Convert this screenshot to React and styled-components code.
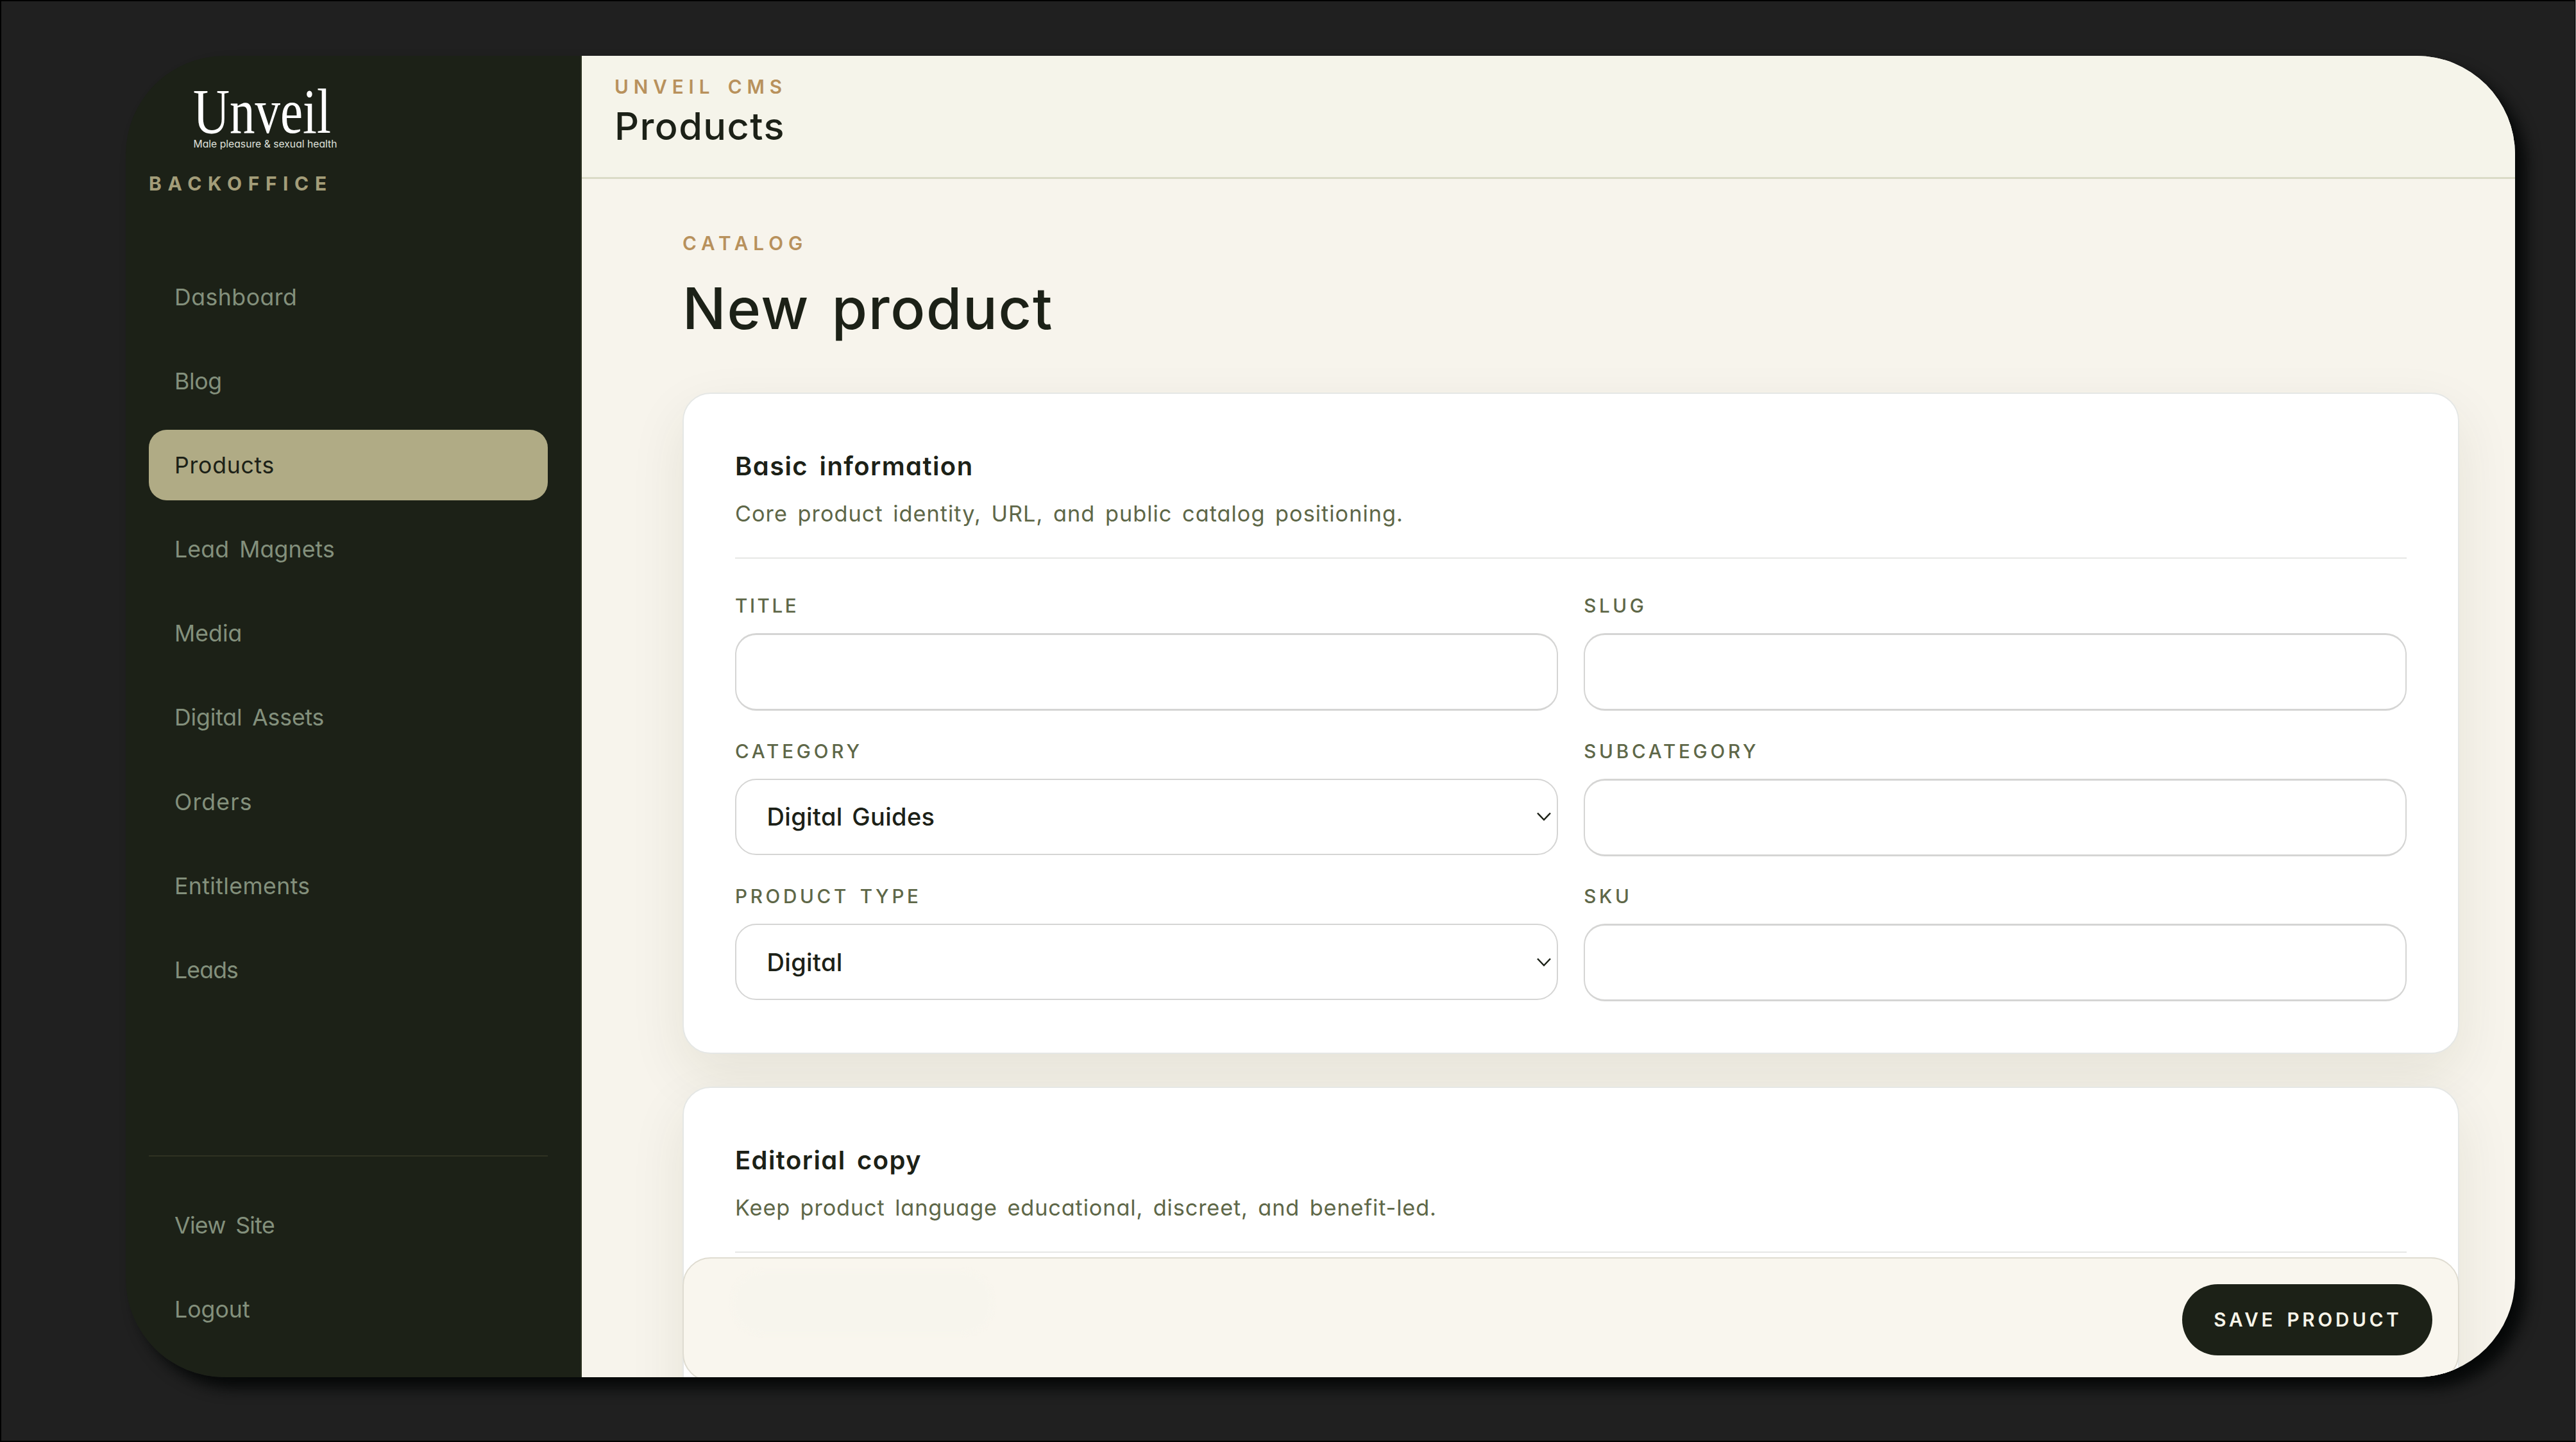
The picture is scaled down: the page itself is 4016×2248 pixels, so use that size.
import React from "react";
import styled, { createGlobalStyle } from "styled-components";

const GlobalStyle = createGlobalStyle`
  *, *::before, *::after { box-sizing: border-box; }
  html, body { margin: 0; padding: 0; background: #8c8c8c; }
  body {
    font-family: Inter, "Open Sans", "Liberation Sans", sans-serif;
    font-feature-settings: "cv11" 1;
    color: #1c2117;
    overflow: hidden;
  }
  h1, h2, p { margin: 0; }
`;

const Desktop = styled.div`
  width: 4015px;
  height: 2248px;
  padding: 85px 0 0 194px;
  background: #202020;
  border: 2px solid #000;
  border-right-width: 1px;
  overflow: hidden;
`;

const Window = styled.div`
  position: relative;
  display: flex;
  width: 3725px;
  height: 2060px;
  border-radius: 154px;
  box-shadow: 17px 17px 22px #060808;
  overflow: hidden;
`;

const Sidebar = styled.aside`
  display: flex;
  flex-direction: column;
  flex: none;
  width: 711px;
  padding: 0 51px 51px 36px;
  background: #1c2117;
  border-right: 2px solid #2a301f;
`;

const Logo = styled.svg`
  display: block;
  flex: none;
  width: 250px;
  height: 161px;
  margin-left: 58px;
  overflow: visible;
`;

const BrandLabel = styled.div`
  margin-top: 16px;
  line-height: 44px;
  font-size: 30px;
  font-weight: 700;
  letter-spacing: 9.6px;
  color: #a39d79;
`;

const Nav = styled.nav`
  display: flex;
  flex-direction: column;
  gap: 21.1px;
  margin-top: 100px;
`;

const FooterNav = styled(Nav)`
  margin-top: auto;
  padding-top: 52px;
  border-top: 2px solid #2f3222;
`;

const NavItem = styled.a`
  display: flex;
  align-items: center;
  height: 110px;
  padding: 0 40px;
  border-radius: 28px;
  font-size: 35.7px;
  font-weight: 400;
  letter-spacing: ${(p) => p.$ls || 0}px;
  word-spacing: 6px;
  white-space: pre;
  background: ${(p) => (p.$active ? "#b0ab85" : "transparent")};
  color: ${(p) => (p.$active ? "#1c2117" : "#83907c")};
`;

const Main = styled.main`
  display: flex;
  flex-direction: column;
  flex: 1;
  min-width: 0;
  background: #f7f4ec;
`;

const TopBar = styled.header`
  flex: none;
  height: 192px;
  padding: 26px 51px 0;
  background: #f5f4ea;
  border-bottom: 3px solid #dadbc7;
`;

const Eyebrow = styled.div`
  line-height: 44px;
  font-size: 29.7px;
  font-weight: 600;
  letter-spacing: 7.9px;
  word-spacing: ${(p) => p.$ws || 0}px;
  color: #b8915c;
`;

const BarTitle = styled.div`
  line-height: 70px;
  margin-top: 4px;
  font-size: 59.5px;
  font-weight: 500;
  letter-spacing: 1.4px;
`;

const Content = styled.section`
  flex: 1;
  min-height: 0;
  padding: 78px 87px 0 157px;
  overflow: hidden;
`;

const PageTitle = styled.h1`
  margin-top: 32px;
  margin-bottom: 83px;
  line-height: 96px;
  font-size: 89.5px;
  font-weight: 500;
  letter-spacing: 1.7px;
  word-spacing: 9px;
`;

const Card = styled.section`
  height: 1031px;
  margin-bottom: 51px;
  padding: 80px;
  background: #fff;
  border: 2px solid #e5e7e5;
  border-radius: 44px;
  box-shadow: 0 33px 87px rgba(50, 56, 10, 0.09);
`;

const CardHead = styled.header`
  padding-bottom: 38px;
  border-bottom: 2px solid #e6e7e5;
`;

const CardTitle = styled.h2`
  line-height: 65px;
  font-size: 40px;
  font-weight: 600;
  letter-spacing: 1.4px;
  word-spacing: 6px;
`;

const CardText = styled.p`
  margin-top: 12px;
  line-height: 60px;
  font-size: 34.3px;
  letter-spacing: ${(p) => p.$ls || 1}px;
  word-spacing: 5px;
  color: #5e6748;
`;

const Fields = styled.div`
  display: grid;
  grid-template-columns: 1fr 1fr;
  grid-auto-rows: 186px;
  gap: 40.5px;
  margin-top: 51px;
`;

const Field = styled.label`
  display: flex;
  flex-direction: column;
  gap: 21px;
`;

const FieldLabel = styled.span`
  line-height: 44px;
  font-size: 29.6px;
  font-weight: 500;
  letter-spacing: ${(p) => p.$ls}px;
  word-spacing: 4px;
  color: #5e6748;
`;

const Control = styled.div`
  display: flex;
  align-items: center;
  justify-content: space-between;
  height: ${(p) => (p.$select ? 119 : 121)}px;
  padding: 0 8px 0 47.5px;
  border: solid #d5d5d4;
  border-width: ${(p) => (p.$select ? "2px" : "3px 2px")};
  border-radius: 33px;
  background: #fff;
  font-size: 38px;
  font-weight: 500;
  letter-spacing: 0.35px;
  word-spacing: 4px;
`;

const ActionBar = styled.footer`
  position: absolute;
  left: 868px;
  right: 87px;
  bottom: -7px;
  display: flex;
  justify-content: flex-end;
  align-items: center;
  height: 194px;
  padding: 0 40px;
  background: #f9f6ee;
  border: 2px solid #dfdcd1;
  border-radius: 44px;

  &::before {
    content: "";
    position: absolute;
    left: 76px;
    top: 20px;
    width: 405px;
    height: 98px;
    border-radius: 46px;
    background: #f7f5ed;
    filter: blur(3px);
  }
`;

const SaveButton = styled.button`
  width: 390px;
  height: 111px;
  padding: 0 0 0 2px;
  border: 0;
  border-radius: 56px;
  background: #1c2117;
  color: #f7f4e8;
  font-family: inherit;
  font-size: 29.6px;
  font-weight: 600;
  letter-spacing: 4.8px;
  word-spacing: 5px;
`;

const Chevron = () => (
  <svg width="24" height="16" viewBox="0 0 24 16" fill="none">
    <path d="M2 2.5 12 13 22 2.5" stroke="#1c2117" strokeWidth="2.5" />
  </svg>
);

const Wordmark = () => (
  <Logo viewBox="0 -41 250 161">
    <text x="11" y="79" fontFamily="Liberation Serif, serif" fontSize="100" fill="#fff" textLength="215" lengthAdjust="spacingAndGlyphs">
      Unveil
    </text>
    <text x="11.5" y="101.5" fontSize="16" fontWeight="400" fill="#dfe0db" textLength="224" lengthAdjust="spacingAndGlyphs">
      Male pleasure &amp; sexual health
    </text>
  </Logo>
);

const NAV = [
  { label: "Dashboard", ls: 0.45 },
  { label: "Blog", ls: -0.4 },
  { label: "Products", ls: 0.7, active: true },
  { label: "Lead Magnets", ls: 0.1 },
  { label: "Media", ls: 0 },
  { label: "Digital Assets", ls: -0.2 },
  { label: "Orders", ls: 1.1 },
  { label: "Entitlements", ls: 0.35 },
  { label: "Leads", ls: -0.9 },
];

const FOOTER_NAV = [
  { label: "View Site", ls: -0.7 },
  { label: "Logout", ls: 0 },
];

const FIELDS = [
  { label: "TITLE", ls: 3.6 },
  { label: "SLUG", ls: 4.6 },
  { label: "CATEGORY", ls: 4.8, value: "Digital Guides" },
  { label: "SUBCATEGORY", ls: 4.75 },
  { label: "PRODUCT TYPE", ls: 4.7, value: "Digital" },
  { label: "SKU", ls: 4.6 },
];

const renderNav = (items) =>
  items.map((n) => (
    <NavItem key={n.label} $active={n.active} $ls={n.ls}>
      {n.label}
    </NavItem>
  ));

export default function App() {
  return (
    <>
      <GlobalStyle />
      <Desktop>
        <Window>
          <Sidebar>
            <Wordmark />
            <BrandLabel>BACKOFFICE</BrandLabel>
            <Nav>{renderNav(NAV)}</Nav>
            <FooterNav>{renderNav(FOOTER_NAV)}</FooterNav>
          </Sidebar>
          <Main>
            <TopBar>
              <Eyebrow $ws={5}>UNVEIL CMS</Eyebrow>
              <BarTitle>Products</BarTitle>
            </TopBar>
            <Content>
              <Eyebrow>CATALOG</Eyebrow>
              <PageTitle>New product</PageTitle>
              <Card>
                <CardHead>
                  <CardTitle>Basic information</CardTitle>
                  <CardText $ls={1}>Core product identity, URL, and public catalog positioning.</CardText>
                </CardHead>
                <Fields>
                  {FIELDS.map((f) => (
                    <Field key={f.label}>
                      <FieldLabel $ls={f.ls}>{f.label}</FieldLabel>
                      <Control $select={Boolean(f.value)}>
                        {f.value && (
                          <>
                            <span>{f.value}</span>
                            <Chevron />
                          </>
                        )}
                      </Control>
                    </Field>
                  ))}
                </Fields>
              </Card>
              <Card>
                <CardHead>
                  <CardTitle>Editorial copy</CardTitle>
                  <CardText $ls={0.86}>Keep product language educational, discreet, and benefit-led.</CardText>
                </CardHead>
              </Card>
            </Content>
          </Main>
          <ActionBar>
            <SaveButton>SAVE PRODUCT</SaveButton>
          </ActionBar>
        </Window>
      </Desktop>
    </>
  );
}
